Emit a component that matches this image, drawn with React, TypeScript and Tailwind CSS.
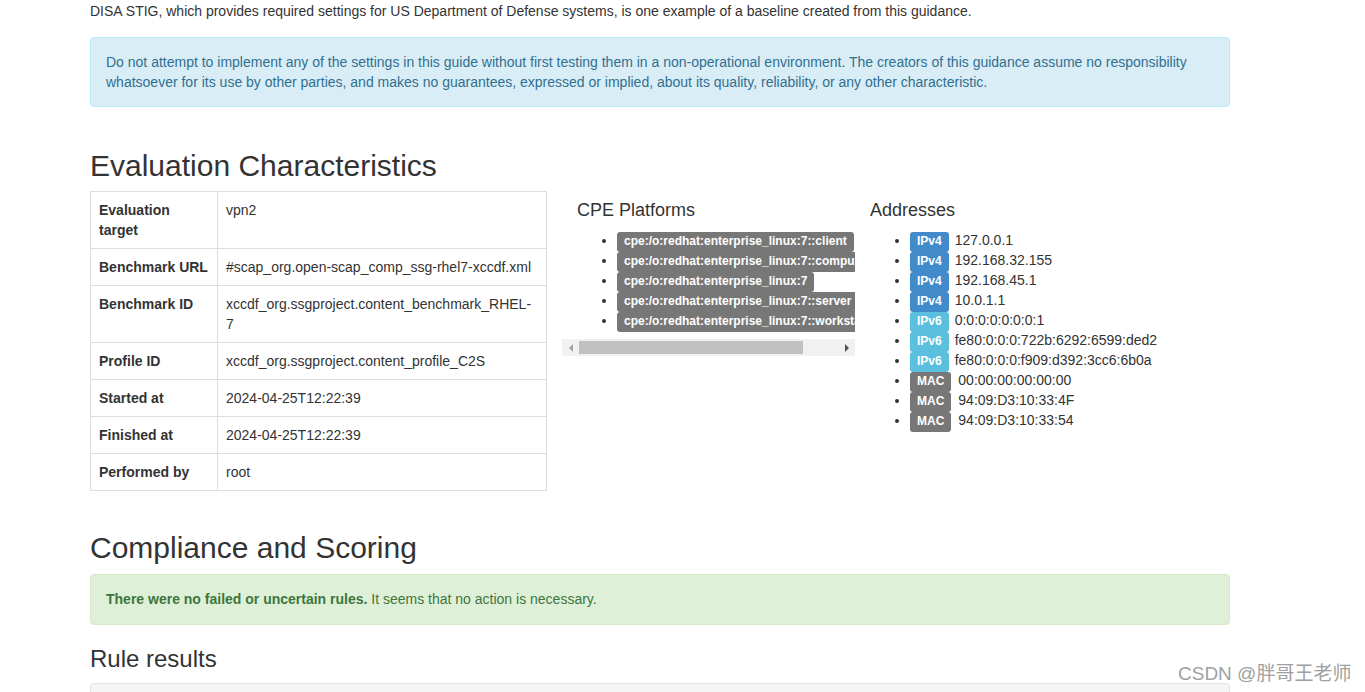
import React from "react";

const rows: { k: string; v: React.ReactNode }[] = [
  { k: "Evaluation target", v: "vpn2" },
  { k: "Benchmark URL", v: "#scap_org.open-scap_comp_ssg-rhel7-xccdf.xml" },
  { k: "Benchmark ID", v: "xccdf_org.ssgproject.content_benchmark_RHEL-7" },
  { k: "Profile ID", v: "xccdf_org.ssgproject.content_profile_C2S" },
  { k: "Started at", v: "2024-04-25T12:22:39" },
  { k: "Finished at", v: "2024-04-25T12:22:39" },
  { k: "Performed by", v: "root" },
];

const cpes = [
  "cpe:/o:redhat:enterprise_linux:7::client",
  "cpe:/o:redhat:enterprise_linux:7::computenode",
  "cpe:/o:redhat:enterprise_linux:7",
  "cpe:/o:redhat:enterprise_linux:7::server",
  "cpe:/o:redhat:enterprise_linux:7::workstation",
];

const addresses: { type: "IPv4" | "IPv6" | "MAC"; value: string }[] = [
  { type: "IPv4", value: "127.0.0.1" },
  { type: "IPv4", value: "192.168.32.155" },
  { type: "IPv4", value: "192.168.45.1" },
  { type: "IPv4", value: "10.0.1.1" },
  { type: "IPv6", value: "0:0:0:0:0:0:0:1" },
  { type: "IPv6", value: "fe80:0:0:0:722b:6292:6599:ded2" },
  { type: "IPv6", value: "fe80:0:0:0:f909:d392:3cc6:6b0a" },
  { type: "MAC", value: "00:00:00:00:00:00" },
  { type: "MAC", value: "94:09:D3:10:33:4F" },
  { type: "MAC", value: "94:09:D3:10:33:54" },
];

function Label({ color, children }: { color: string; children: React.ReactNode }) {
  return (
    <span
      className={`${color} text-white font-bold text-[12px] leading-none px-[7px] pt-[2.4px] pb-[3.6px] rounded-[3px] whitespace-nowrap`}
    >
      {children}
    </span>
  );
}

function labelColor(t: string) {
  if (t === "IPv4") return "bg-[#428bca]";
  if (t === "IPv6") return "bg-[#5bc0de]";
  return "bg-[#777777]";
}

export default function App() {
  return (
    <div className="relative h-[692px] overflow-hidden bg-white text-[#333] text-[14px] leading-[20px] font-['Liberation_Sans',Arial,sans-serif]">
      <div className="ml-[90px] w-[1140px] flex flex-col">
        <p className="mt-[1px]">
          DISA STIG, which provides required settings for US Department of Defense systems, is one
          example of a baseline created from this guidance.
        </p>

        <div className="mt-[16px] bg-[#d9edf7] border border-[#bce8f1] text-[#31708f] rounded-[4px] px-[15px] py-[14px]">
          Do not attempt to implement any of the settings in this guide without first testing them in a
          non-operational environment. The creators of this guidance assume no responsibility whatsoever
          for its use by other parties, and makes no guarantees, expressed or implied, about its quality,
          reliability, or any other characteristic.
        </div>

        <h2 className="mt-[42px] text-[30px] leading-[33px] font-normal">Evaluation Characteristics</h2>

        <div className="mt-[9px] flex items-start">
          <table className="w-[457px] table-fixed border-collapse border border-[#ddd]">
            <tbody>
              {rows.map((r) => (
                <tr key={r.k}>
                  <th className="w-[127px] border border-[#ddd] p-[8px] text-left align-top font-bold">
                    {r.k}
                  </th>
                  <td className="border border-[#ddd] p-[8px] align-top">{r.v}</td>
                </tr>
              ))}
            </tbody>
          </table>

          <div className="ml-[15px] w-[293px] flex flex-col">
            <div className="px-[15px] overflow-hidden">
              <h4 className="mt-[9px] text-[18px] leading-[20px] font-normal">CPE Platforms</h4>
              <ul className="mt-[10px] mb-[9px] pl-[40px] list-disc">
                {cpes.map((c) => (
                  <li key={c} className="whitespace-nowrap">
                    <Label color="bg-[#777777]">{c}</Label>
                  </li>
                ))}
              </ul>
            </div>
            <div className="h-[17px] bg-[#f1f1f1] flex items-center">
              <div className="w-[17px] flex justify-center">
                <div className="w-0 h-0 border-y-[4px] border-y-transparent border-r-[4px] border-r-[#a3a3a3]" />
              </div>
              <div className="w-[224px] h-[13px] bg-[#c1c1c1]" />
              <div className="flex-1" />
              <div className="w-[17px] flex justify-center">
                <div className="w-0 h-0 border-y-[4px] border-y-transparent border-l-[4px] border-l-[#505050]" />
              </div>
            </div>
          </div>

          <div className="ml-[15px] w-[360px]">
            <h4 className="mt-[9px] text-[18px] leading-[20px] font-normal">Addresses</h4>
            <ul className="mt-[10px] pl-[40px] list-disc">
              {addresses.map((a) => (
                <li key={a.value} className="whitespace-nowrap">
                  <Label color={labelColor(a.type)}>{a.type}</Label>
                  <span className={a.type === "MAC" ? "ml-[7px]" : "ml-[6px]"}>{a.value}</span>
                </li>
              ))}
            </ul>
          </div>
        </div>

        <h2 className="mt-[40px] text-[30px] leading-[33px] font-normal">Compliance and Scoring</h2>

        <div className="mt-[10px] bg-[#dff0d8] border border-[#d6e9c6] text-[#3c763d] rounded-[4px] px-[15px] pt-[14px] pb-[15px]">
          <strong className="font-bold">There were no failed or uncertain rules.</strong> It seems that no
          action is necessary.
        </div>

        <h3 className="mt-[21px] text-[24px] leading-[26px] font-normal">Rule results</h3>

        <div className="mt-[11px] h-[60px] bg-[#f5f5f5] border border-[#e3e3e3] rounded-[4px]" />
      </div>

      <div className="absolute left-[1178px] top-[662px] text-[19px] leading-[24px] text-[#a0a0a0] font-['Liberation_Sans','Noto_Sans_CJK_SC',sans-serif] [text-shadow:0_0_2px_#fff]">
        CSDN @胖哥王老师
      </div>
    </div>
  );
}
